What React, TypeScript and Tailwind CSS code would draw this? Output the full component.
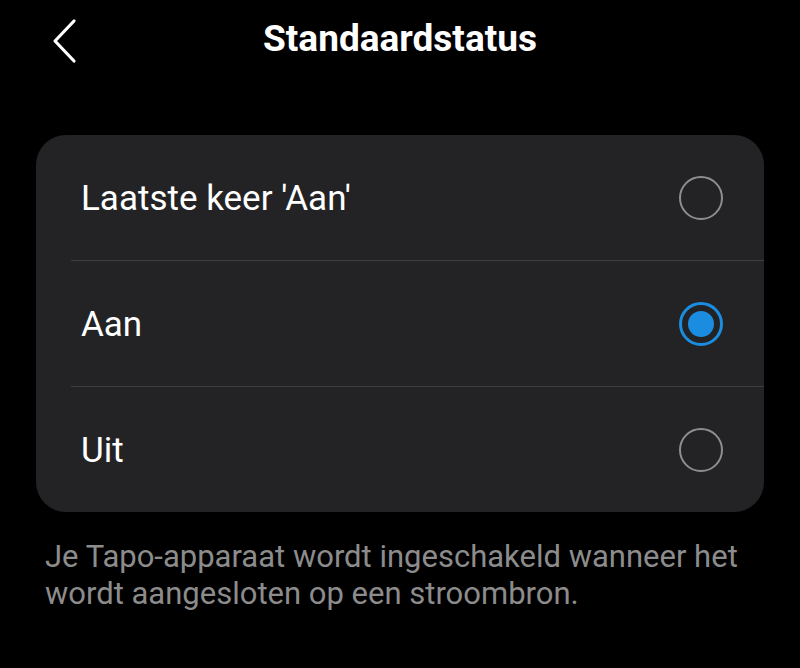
const options = [
  { label: "Laatste keer 'Aan'", selected: false },
  { label: 'Aan', selected: true },
  { label: 'Uit', selected: false },
];

function Radio({ selected }: { selected: boolean }) {
  if (selected) {
    return (
      <span className="flex h-[44px] w-[44px] items-center justify-center rounded-full border-[3px] border-[#1a8de0]">
        <span className="h-[26px] w-[26px] rounded-full bg-[#1a8de0]" />
      </span>
    );
  }
  return <span className="h-[44px] w-[44px] rounded-full border-[2.5px] border-[#8e8e8e]" />;
}

export default function App() {
  return (
    <div className="h-[668px] w-[800px] bg-black text-white" style={{ fontFamily: 'Roboto, "Noto Sans", sans-serif' }}>
      {/* Header */}
      <div className="relative flex h-[78px] items-center justify-center">
        <button className="absolute left-[46px] top-[14px] p-1">
          <svg width="30" height="46" viewBox="0 0 30 46" fill="none">
            <path d="M24 3 L5 23 L24 43" stroke="white" strokeWidth="3.2" strokeLinecap="round" strokeLinejoin="round" />
          </svg>
        </button>
        <h1 className="text-[37px] font-bold">Standaardstatus</h1>
      </div>

      {/* Options card */}
      <div className="mx-[36px] mt-[57px] overflow-hidden rounded-[30px] bg-[#232325]">
        {options.map((o, i) => (
          <div key={o.label}>
            {i > 0 && <div className="ml-[35px] h-px bg-[#3e3e40]" />}
            <div className="flex h-[125px] items-center justify-between pl-[45px] pr-[41px]">
              <span className="pt-[4px] text-[35px] text-white">{o.label}</span>
              <Radio selected={o.selected} />
            </div>
          </div>
        ))}
      </div>

      <p className="mx-[45px] mt-[26px] text-[31px] leading-[37px] text-[#8c8c8c]">
        Je Tapo-apparaat wordt ingeschakeld wanneer het wordt aangesloten op een stroombron.
      </p>
    </div>
  );
}
